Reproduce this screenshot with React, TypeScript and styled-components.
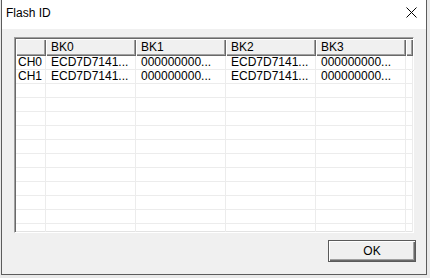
import styled, { createGlobalStyle } from 'styled-components'

const GlobalStyle = createGlobalStyle`
    html, body {
        margin: 0;
        padding: 0;
        background: #e9e9e9;
    }
    body {
        font-family: 'Liberation Sans', Arial, sans-serif;
        font-size: 12px;
        color: #000;
    }
`

const columns = ['BK0', 'BK1', 'BK2', 'BK3']

const rows = [
    { id: 'CH0', values: ['ECD7D7141...', '000000000...', 'ECD7D7141...', '000000000...'] },
    { id: 'CH1', values: ['ECD7D7141...', '000000000...', 'ECD7D7141...', '000000000...'] },
]

// empty rows fill the rest of the grid
const EMPTY_ROWS = 11

const App = () => {
    const filler = Array.from({ length: EMPTY_ROWS }, (_, i) => i)
    return (
        <>
            <GlobalStyle />
            <Window>
                <TitleBar>
                    <Title>Flash ID</Title>
                    <CloseButton aria-label="close">
                        <svg width="11" height="11" viewBox="0 0 11 11">
                            <path d="M0.5 0.5 L10.5 10.5 M10.5 0.5 L0.5 10.5" stroke="#000" strokeWidth="1" />
                        </svg>
                    </CloseButton>
                </TitleBar>
                <Body>
                    <Grid>
                        <HeaderRow>
                            <HeaderCell $width={30} />
                            { columns.map(c => <HeaderCell key={c} $width={90}>{ c }</HeaderCell>) }
                            <HeaderCell $width={7} />
                        </HeaderRow>
                        { rows.map(r => (
                            <Row key={r.id}>
                                <Cell $width={30} $pad={2}>{ r.id }</Cell>
                                { r.values.map((v, i) => <Cell key={i} $width={90}>{ v }</Cell>) }
                                <Cell $width={7} />
                            </Row>
                        )) }
                        { filler.map(i => (
                            <Row key={'e' + i}>
                                <Cell $width={30} />
                                { columns.map(c => <Cell key={c} $width={90} />) }
                                <Cell $width={7} />
                            </Row>
                        )) }
                    </Grid>
                    <Footer>
                        <Button>OK</Button>
                    </Footer>
                </Body>
            </Window>
        </>
    )
}

export default App

// 样式组件
const Window = styled.div`
    width: 426px;
    height: 275px;
    margin-left: 1px;
    box-sizing: border-box;
    border: 1px solid #5c5c5c;
    border-top: none;
    background: #f0f0f0;
    display: flex;
    flex-direction: column;
`

const TitleBar = styled.div`
    height: 29px;
    background: #fff;
    display: flex;
    align-items: center;
    justify-content: space-between;
    padding: 0 9px 0 4px;
    flex-shrink: 0;
`

const Title = styled.div`
    font-size: 12px;
    padding-bottom: 3px;
`

const CloseButton = styled.div`
    width: 11px;
    height: 11px;
    display: flex;
    margin-bottom: 4px;
`

const Body = styled.div`
    flex: 1;
    padding: 8px 0 0 12px;
    display: flex;
    flex-direction: column;
`

const Grid = styled.div`
    width: 400px;
    height: 196px;
    box-sizing: border-box;
    background: #fff;
    border-top: 1px solid #a0a0a0;
    border-left: 1px solid #a0a0a0;
    border-right: 1px solid #fff;
    border-bottom: 1px solid #fff;
    box-shadow: inset 1px 1px 0 #696969, inset -1px -1px 0 #e3e3e3;
    padding: 1px 0 0 1px;
    overflow: hidden;
`

const HeaderRow = styled.div`
    display: flex;
    height: 17px;
`

const HeaderCell = styled.div<{ $width: number }>`
    width: ${props => props.$width}px;
    flex-shrink: 0;
    box-sizing: border-box;
    background: #f0f0f0;
    box-shadow: inset 1px 1px 0 #fff, inset -1px -1px 0 #696969, inset -2px -2px 0 #a0a0a0;
    padding: 2px 0 0 5px;
    line-height: 13px;
    white-space: nowrap;
    overflow: hidden;
`

const Row = styled.div`
    display: flex;
    height: 14px;
`

const Cell = styled.div<{ $width: number, $pad?: number }>`
    width: ${props => props.$width}px;
    flex-shrink: 0;
    box-sizing: border-box;
    border-right: 1px solid #ececec;
    border-bottom: 1px solid #ececec;
    padding-left: ${props => props.$pad ?? 5}px;
    line-height: 13px;
    white-space: nowrap;
    overflow: hidden;
`

const Footer = styled.div`
    display: flex;
    justify-content: flex-end;
    padding: 7px 10px 0 0;
`

const Button = styled.div`
    width: 88px;
    height: 22px;
    box-sizing: border-box;
    border: 1px solid #5a5a5a;
    background: #f0f0f0;
    box-shadow: inset 1px 1px 0 #fff, inset -1px -1px 0 #696969, inset -2px -2px 0 #a0a0a0;
    display: flex;
    align-items: center;
    justify-content: center;
    font-size: 12px;
    user-select: none;
`
